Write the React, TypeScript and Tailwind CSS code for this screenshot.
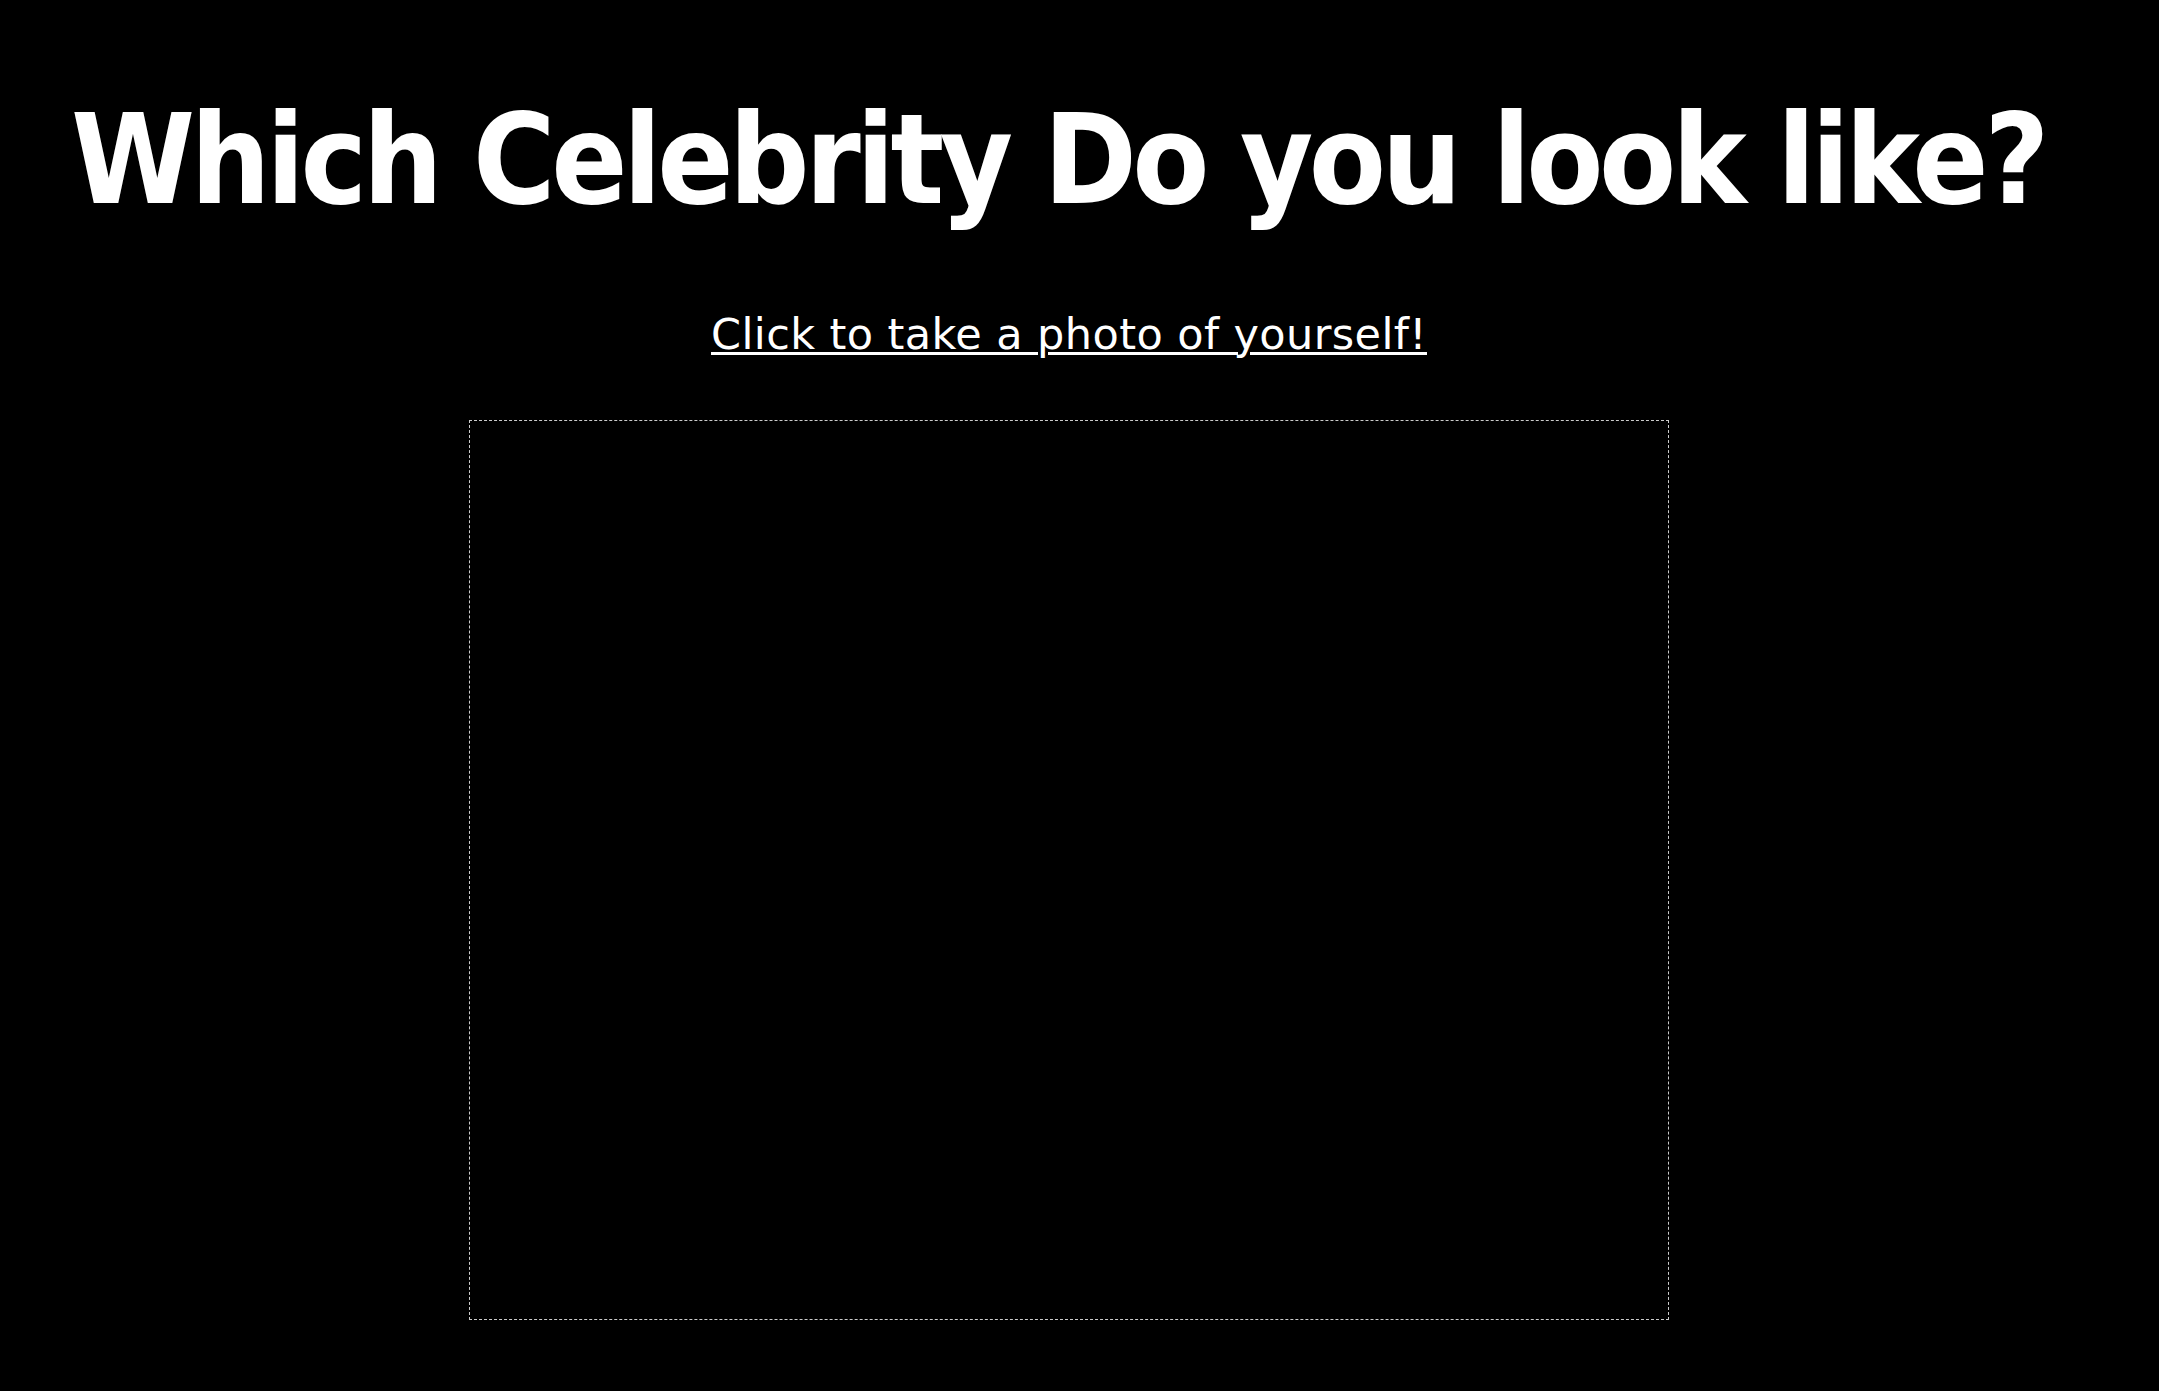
export default function App() {
  return (
    <div
      className="min-h-[1391px] w-full bg-black text-white flex flex-col items-center pr-[21px]"
      style={{ fontFamily: '"DejaVu Sans", "Liberation Sans", sans-serif' }}
    >
      <h1
        className="mt-[85px] mr-[22px] text-[125px] leading-[150px] font-bold whitespace-nowrap tracking-[-4.4px]"
        style={{ fontFamily: '"DejaVu Sans Condensed", "DejaVu Sans", sans-serif' }}
      >
        Which Celebrity Do you look like?
      </h1>
      <a
        href="#"
        className="mt-[74px] text-[43px] leading-[50px] tracking-[0.4px] underline underline-offset-[3px] decoration-[3px] whitespace-nowrap"
      >
        Click to take a photo of yourself!
      </a>
      <div className="mt-[61px] w-[1200px] h-[900px] border border-dashed border-white/80"></div>
    </div>
  );
}
